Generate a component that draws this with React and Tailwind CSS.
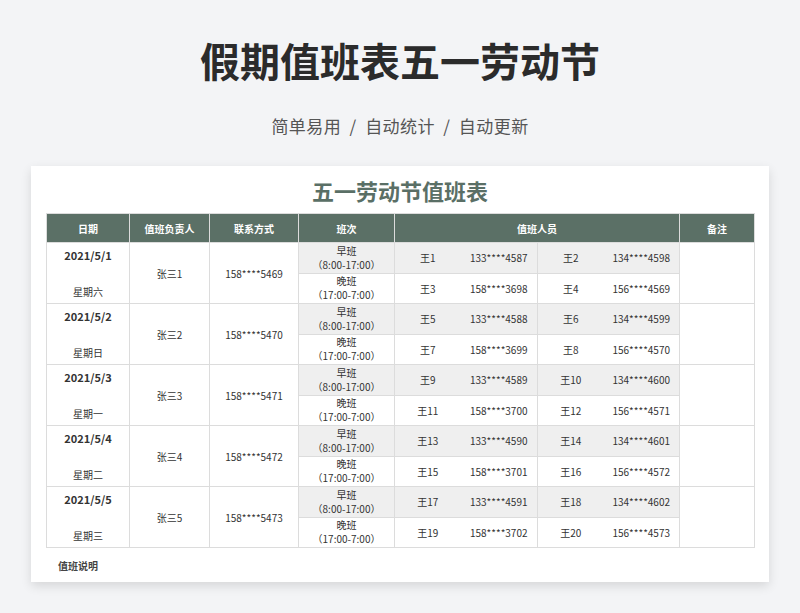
const days=[["2021/5/1","星期六",1,"5469",["4587","4598","3698","4569"]],["2021/5/2","星期日",2,"5470",["4588","4599","3699","4570"]],["2021/5/3","星期一",3,"5471",["4589","4600","3700","4571"]],["2021/5/4","星期二",4,"5472",["4590","4601","3701","4572"]],["2021/5/5","星期三",5,"5473",["4591","4602","3702","4573"]]];
const bd="border border-[#dcdcdc]";
export default function App(){
return(<div className="w-[800px] h-[613px] overflow-hidden bg-[#f3f4f6] text-[#333]" style={{fontFamily:'"Noto Sans CJK SC","Noto Sans",sans-serif'}}>
<div className="pt-[34px] text-center text-[40px] font-bold leading-[52px] text-[#2b2b2b]">假期值班表五一劳动节</div>
<div className="mt-[28px] text-center text-[17px] leading-[24px] text-[#555] tracking-wide">简单易用 &nbsp;/&nbsp; 自动统计 &nbsp;/&nbsp; 自动更新</div>
<div className="mx-[31px] mt-[28px] h-[416px] bg-white shadow-[0_4px_10px_rgba(0,0,0,0.12)] overflow-hidden px-[15px]">
<div className="text-center text-[22px] font-bold text-[#5a6f66] leading-[46px] pt-[1px]">五一劳动节值班表</div>
<table className="border-collapse w-[708px] text-[10px] text-center table-fixed">
<colgroup><col className="w-[83px]"/><col className="w-[80px]"/><col className="w-[89px]"/><col className="w-[96px]"/><col className="w-[66px]"/><col className="w-[77px]"/><col className="w-[66px]"/><col className="w-[76px]"/><col className="w-[75px]"/></colgroup>
<thead><tr className="bg-[#5b7066] text-white h-[29px] font-bold text-[10px]">
{["日期","值班负责人","联系方式","班次"].map(h=><th key={h} className="border border-[#dcdcdc]">{h}</th>)}
<th colSpan={4} className="border border-[#dcdcdc]">值班人员</th><th className="border border-[#dcdcdc]">备注</th></tr></thead>
<tbody>{days.map(([d,w,n,p,ph],i)=>{const a=i*4+1;return[
<tr key={d+"a"} className="h-[30.5px]">
<td rowSpan={2} className={bd}><div className="flex flex-col justify-between h-[52px]"><div className="font-bold text-[11px]">{d}</div><div>{w}</div></div></td>
<td rowSpan={2} className={bd}>张三{n}</td>
<td rowSpan={2} className={bd}>158****{p}</td>
<td className={bd+" bg-[#efefef] leading-[14px]"}><div>早班</div><div>（8:00-17:00）</div></td>
<td className="bg-[#efefef] border-y border-[#dcdcdc]">王{a}</td><td className="bg-[#efefef] border-y border-r border-[#dcdcdc]">133****{ph[0]}</td>
<td className="bg-[#efefef] border-y border-[#dcdcdc]">王{a+1}</td><td className="bg-[#efefef] border-y border-r border-[#dcdcdc]">134****{ph[1]}</td>
<td rowSpan={2} className={bd}></td></tr>,
<tr key={d+"b"} className="h-[30.5px]">
<td className={bd+" leading-[14px]"}><div>晚班</div><div>（17:00-7:00）</div></td>
<td className="border-y border-[#dcdcdc]">王{a+2}</td><td className="border-y border-r border-[#dcdcdc]">158****{ph[2]}</td>
<td className="border-y border-[#dcdcdc]">王{a+3}</td><td className="border-y border-r border-[#dcdcdc]">156****{ph[3]}</td></tr>]})}</tbody></table>
<div className="mt-[10px] ml-[12px] text-[10px] font-bold text-[#444]">值班说明</div>
</div></div>)}
